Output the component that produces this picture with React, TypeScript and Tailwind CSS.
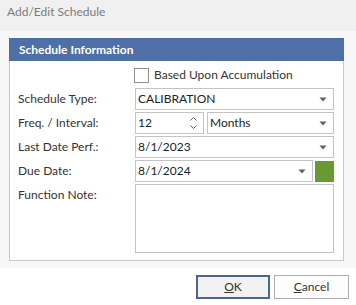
import type { ReactNode } from 'react'

function Caret() {
  return (
    <svg width="8" height="5" viewBox="0 0 8 5" className="shrink-0">
      <path d="M0.5 0.5 L7.5 0.5 L4 4.5 Z" fill="#5f5f5f" />
    </svg>
  )
}

function Spinner() {
  return (
    <div className="flex flex-col items-center gap-[4px] pr-[6px]">
      <svg width="7" height="4" viewBox="0 0 7 4">
        <path d="M0.5 3.5 L3.5 0.5 L6.5 3.5" fill="none" stroke="#666" strokeWidth="1" />
      </svg>
      <svg width="7" height="4" viewBox="0 0 7 4">
        <path d="M0.5 0.5 L3.5 3.5 L6.5 0.5" fill="none" stroke="#666" strokeWidth="1" />
      </svg>
    </div>
  )
}

function Field({ value, width, caret = true }: { value: string; width: string; caret?: boolean }) {
  return (
    <div className={`${width} h-[22px] flex items-center justify-between border border-[#c4c4c4] bg-white pl-[2px] pr-[6px]`}>
      <span className="text-[#222]">{value}</span>
      {caret && <Caret />}
    </div>
  )
}

function Row({ label, children }: { label: string; children: ReactNode }) {
  return (
    <div className="flex items-center h-[22px]">
      <div className="w-[125px] pl-[8px] text-[#333]">{label}</div>
      {children}
    </div>
  )
}

export default function App() {
  return (
    <div className="w-[356px] h-[305px] flex flex-col text-[12px] leading-none overflow-hidden" style={{ fontFamily: 'Lato, "Noto Sans", sans-serif' }}>
      {/* title */}
      <div className="h-[31px] bg-[#f0f0f0] pl-[7px] pt-[4px] text-[12px] text-[#7b7b7b] leading-[16px]">
        Add/Edit Schedule
      </div>

      {/* body */}
      <div className="h-[237px] bg-[#f7f7f7] pl-[9px] pt-[7px]">
        <div className="w-[335px] h-[223px] border border-[#c8c8c8] bg-white flex flex-col">
          <div className="h-[23px] -mx-px -mt-px bg-[#4e70a6] flex items-center pl-[10px] text-white font-bold">
            Schedule Information
          </div>

          <div className="flex items-center h-[16px] mt-[6px] pl-[124px] gap-[5px]">
            <div className="w-[15px] h-[15px] border border-[#8f8f8f] bg-white" />
            <span className="text-[#333]">Based Upon Accumulation</span>
          </div>

          <div className="flex flex-col gap-[2px] mt-[5px]">
            <Row label="Schedule Type:">
              <Field value="CALIBRATION" width="w-[199px]" />
            </Row>
            <Row label="Freq. / Interval:">
              <div className="w-[69px] h-[22px] flex items-center justify-between border border-[#c4c4c4] bg-white pl-[2px]">
                <span className="text-[#222]">12</span>
                <Spinner />
              </div>
              <div className="ml-[3px]">
                <Field value="Months" width="w-[127px]" />
              </div>
            </Row>
            <Row label="Last Date Perf.:">
              <Field value="8/1/2023" width="w-[199px]" />
            </Row>
            <Row label="Due Date:">
              <Field value="8/1/2024" width="w-[178px]" />
              <div className="ml-[2px] w-[19px] h-[21px] bg-[#679a32]" />
            </Row>
            <div className="flex items-start">
              <div className="w-[125px] pl-[8px] pt-[5px] text-[#333]">Function Note:</div>
              <div className="w-[199px] h-[69px] border border-[#c4c4c4] bg-white" />
            </div>
          </div>
        </div>
      </div>

      {/* footer */}
      <div className="flex-1 bg-white flex justify-end items-start gap-[4px] pr-[7px] pt-[7px]">
        <button className="w-[74px] h-[24px] border-2 border-[#4f6489] bg-[#f2f2f2] text-[#333] flex items-center justify-center">
          <span><span className="underline">O</span>K</span>
        </button>
        <button className="w-[75px] h-[24px] border border-[#adadad] bg-[#fdfdfd] text-[#333] flex items-center justify-center">
          <span><span className="underline">C</span>ancel</span>
        </button>
      </div>
    </div>
  )
}
